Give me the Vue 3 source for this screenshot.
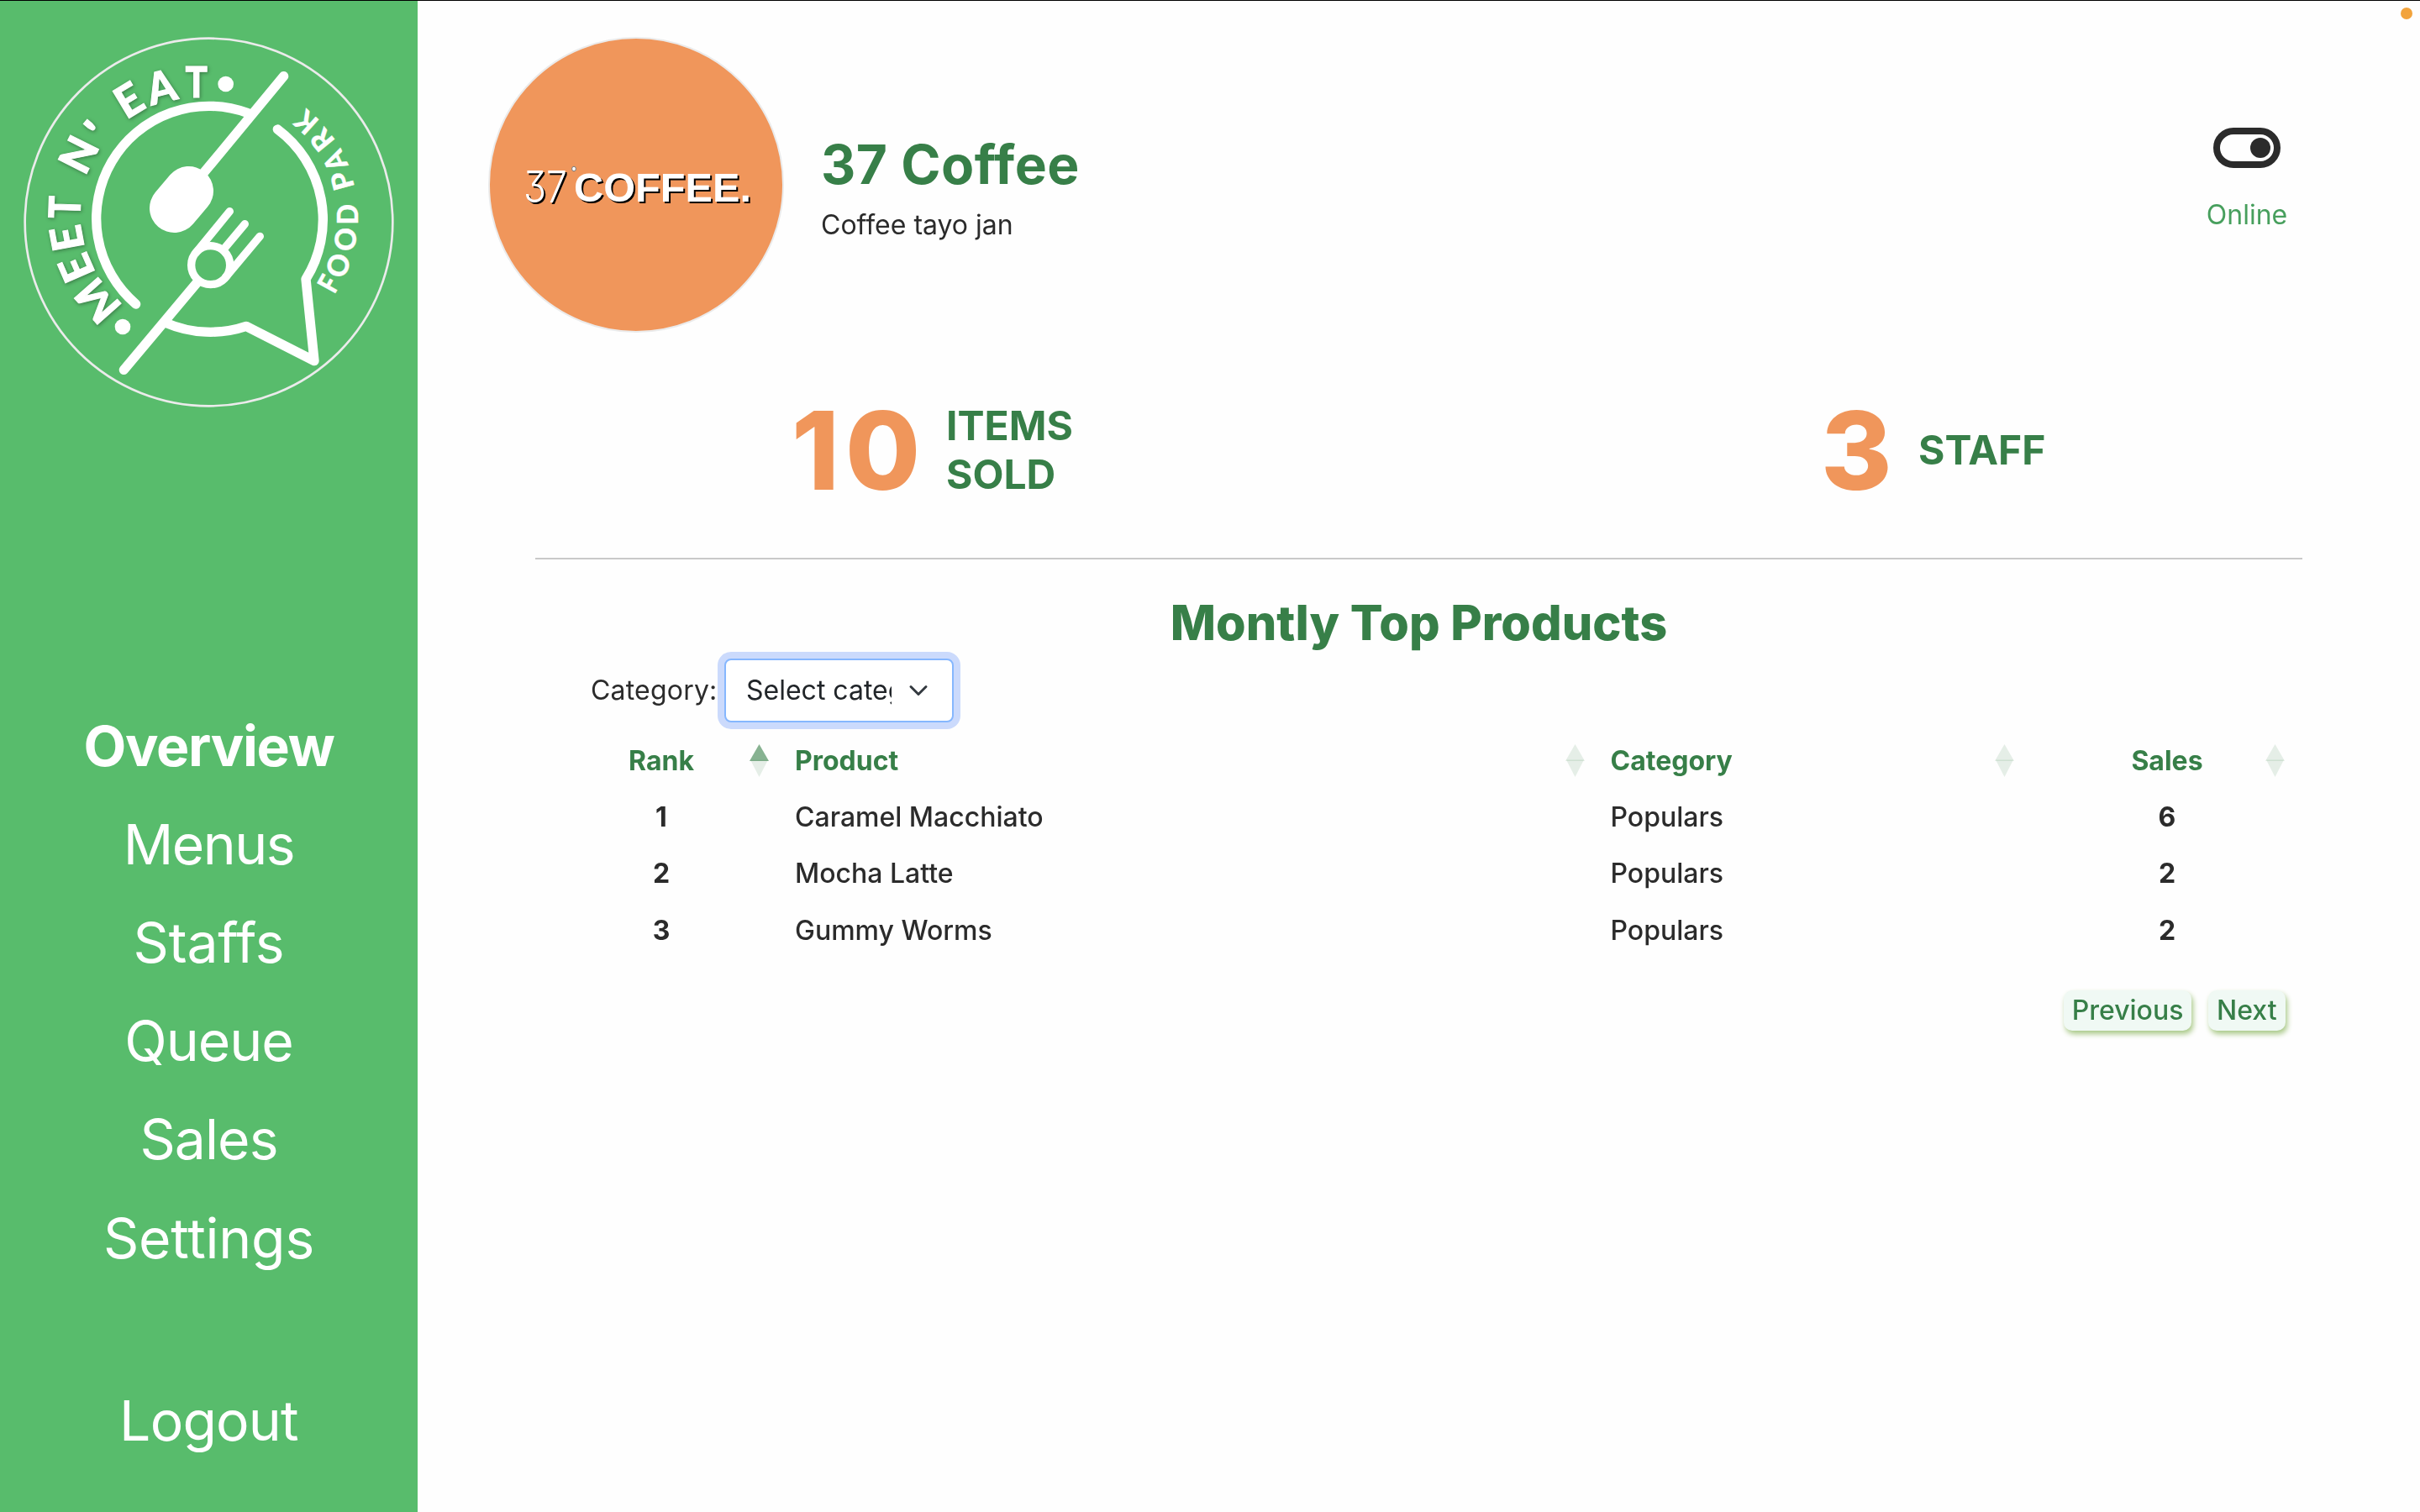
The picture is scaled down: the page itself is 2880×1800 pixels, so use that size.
<script setup>
const nav = [
  { label: 'Overview', active: true, ls: -1.3 },
  { label: 'Menus', ls: -1.5 },
  { label: 'Staffs', ls: -0.2 },
  { label: 'Queue', ls: -1 },
  { label: 'Sales', ls: -0.9 },
  { label: 'Settings', ls: -0.2 },
]

const meet = [
  { c: 'M', x: 391, y: 1038, r: -131.4 },
  { c: 'E', x: 324, y: 936, r: -113.6 },
  { c: 'E', x: 294, y: 842, r: -100.6 },
  { c: 'T', x: 287, y: 743, r: -88, s: 0.84 },
  { c: 'N', x: 331, y: 578, r: -63.4 },
  { c: "'", x: 391, y: 508, r: -50, s: 1.1 },
  { c: 'E', x: 489, y: 406, r: -31.1 },
  { c: 'A', x: 589, y: 366, r: -13.7, s: 0.94 },
  { c: 'T', x: 701, y: 350, r: 0, s: 0.84 },
]
const park = [
  { c: 'F', x: 1206, y: 1032, r: -61, s: 0.85 },
  { c: 'O', x: 1243, y: 960, r: -72 },
  { c: 'O', x: 1270, y: 860, r: -83 },
  { c: 'D', x: 1279, y: 767, r: -90, s: 0.94 },
  { c: 'P', x: 1258, y: 637, r: -105 },
  { c: 'A', x: 1230, y: 560, r: -115, s: 0.94 },
  { c: 'R', x: 1178, y: 478, r: -129.6 },
  { c: 'K', x: 1118, y: 410, r: -137.6, s: 0.94 },
]
const place = (g) => `translate(${g.x} ${g.y}) rotate(${g.r}) scale(${g.s || 1} 1)`

const columns = [
  { label: 'Rank', cls: 'rank', sorted: true },
  { label: 'Product', cls: 'product' },
  { label: 'Category', cls: 'category' },
  { label: 'Sales', cls: 'sales' },
]
const rows = [
  { rank: 1, product: 'Caramel Macchiato', category: 'Populars', sales: 6 },
  { rank: 2, product: 'Mocha Latte', category: 'Populars', sales: 2 },
  { rank: 3, product: 'Gummy Worms', category: 'Populars', sales: 2 },
]
</script>

<template>
  <div class="app">
    <aside class="sidebar">
      <svg class="logo" viewBox="84 133 1323 1323">
        <circle cx="745.5" cy="794.5" r="656.5" fill="none" stroke="#ebebeb" stroke-width="8" />
        <g fill="none" stroke="#fff" stroke-width="34" stroke-linecap="round" stroke-linejoin="round">
          <path d="M485 1087A401.5 401.5 0 0 1 885 405" />
          <path d="M991 463A401.5 401.5 0 0 1 1092 998L1122 1290L879 1166A401.5 401.5 0 0 1 592 1154" />
          <path d="M1013 273L730 615" />
          <path d="M702 1012L442 1322" />
          <path d="M622 744L674 683" stroke-width="176" />
        </g>
        <g fill="none" stroke="#fff" stroke-width="28" stroke-linecap="round">
          <circle cx="752" cy="948" r="69" />
          <path d="M820 756L699 904M874 801L803 886M928 845L805 992" />
        </g>
        <g fill="#fff">
          <circle cx="806" cy="301" r="28" />
          <circle cx="438" cy="1168" r="28" />
        </g>
        <g class="meet">
          <text v-for="(g, i) in meet" :key="i" :transform="place(g)">{{ g.c }}</text>
        </g>
        <g class="park">
          <text v-for="(g, i) in park" :key="i" :transform="place(g)">{{ g.c }}</text>
        </g>
      </svg>
      <nav class="nav">
        <a v-for="n in nav" :key="n.label" class="link" :class="{ active: n.active }" :style="{ letterSpacing: n.ls + 'px' }">{{ n.label }}</a>
        <a class="link logout">Logout</a>
      </nav>
    </aside>

    <main class="main">
      <header class="header">
        <div class="avatar">
          <svg class="brand" viewBox="0 0 280 60">
            <text class="thin" x="6" y="48" textLength="52" lengthAdjust="spacingAndGlyphs">37</text>
            <ellipse cx="66" cy="8" rx="2.4" ry="2.8" fill="#fff" stroke="#777" stroke-width="1" />
            <text class="thick" x="66" y="47" textLength="211" lengthAdjust="spacingAndGlyphs">COFFEE.</text>
          </svg>
        </div>
        <div class="identity">
          <h1 class="title">37 Coffee</h1>
          <p class="tagline">Coffee tayo jan</p>
        </div>
        <div class="status">
          <svg class="toggle" viewBox="0 0 80 48">
            <rect x="4" y="4" width="72" height="40" rx="20" fill="none" stroke="#2b2b2b" stroke-width="8" />
            <circle cx="56" cy="24" r="12" fill="#2b2b2b" />
          </svg>
          <span class="online">Online</span>
        </div>
      </header>

      <section class="stats">
        <div class="stat items">
          <span class="number">10</span>
          <span class="label">ITEMS<br />SOLD</span>
        </div>
        <div class="stat staff">
          <span class="number">3</span>
          <span class="label">STAFF</span>
        </div>
      </section>

      <h2 class="heading">Montly Top Products</h2>

      <div class="filter">
        <span class="filter-label">Category:</span>
        <div class="select">
          <span class="select-text">Select category</span>
          <svg class="chevron" viewBox="0 0 16 16">
            <path d="m2 5 6 6 6-6" fill="none" stroke="#343a40" stroke-width="2" stroke-linecap="round" stroke-linejoin="round" />
          </svg>
        </div>
      </div>

      <table class="table">
        <colgroup>
          <col v-for="c in columns" :key="c.cls" :class="'col-' + c.cls" />
        </colgroup>
        <thead>
          <tr>
            <th v-for="c in columns" :key="c.cls">
              <div class="head" :class="c.cls">
                <span class="head-label">{{ c.label }}</span>
                <svg class="sort" viewBox="0 0 23 39" fill="#377f48">
                  <path d="M11.5 0L23 20H0Z" :opacity="c.sorted ? 0.6 : 0.125" />
                  <path d="M1 18.5H22L11.5 39Z" opacity="0.125" />
                </svg>
              </div>
            </th>
          </tr>
        </thead>
        <tbody>
          <tr v-for="r in rows" :key="r.rank">
            <td class="cell-num">{{ r.rank }}</td>
            <td class="cell-text">{{ r.product }}</td>
            <td class="cell-text">{{ r.category }}</td>
            <td class="cell-num cell-sales">{{ r.sales }}</td>
          </tr>
        </tbody>
      </table>

      <div class="pager">
        <button class="page prev">Previous</button>
        <button class="page next">Next</button>
      </div>
    </main>
    <i class="indicator"></i>
  </div>
</template>

<style>
body { margin: 0; background: #fefefe; }
</style>

<style scoped>
.app {
  position: relative;
  display: flex;
  box-sizing: border-box;
  width: 2880px;
  height: 1800px;
  overflow: hidden;
  border-top: 1px solid #000;
  background: #fefefe;
  color: #2b2b2b;
  font: 400 32px/48px Inter, "Liberation Sans", sans-serif;
}
.sidebar {
  display: flex;
  flex: none;
  flex-direction: column;
  align-items: center;
  box-sizing: border-box;
  width: 497px;
  padding-top: 43px;
  background: #58bc6c;
}
.logo { display: block; flex: none; width: 441px; height: 441px; overflow: visible; }
.meet text, .park text { fill: #fff; stroke: #fff; font-family: Lato, sans-serif; font-weight: 900; text-anchor: middle; }
.meet text { font-size: 156px; stroke-width: 3; }
.meet { filter: drop-shadow(3px 4px 6px rgba(0, 0, 0, 0.35)); }
.park text { font-size: 103px; stroke-width: 1; }
.nav { display: flex; flex-direction: column; align-items: center; margin-top: 344.6px; }
.link { color: #fff; font-size: 66px; font-weight: 430; line-height: 117.2px; }
.link.active { font-weight: 660; }
.logout { margin-top: 100px; letter-spacing: -0.8px; }

.main { flex: 1; }
.header { display: flex; align-items: center; height: 352px; margin: 43px 141px 0 84px; }
.avatar {
  display: flex;
  align-items: center;
  justify-content: center;
  box-sizing: border-box;
  width: 352px;
  height: 352px;
  border: 2px solid #ebebeb;
  border-radius: 50%;
  background: #f0965b;
}
.brand { width: 280px; height: 60px; margin-top: 6px; overflow: visible; }
.brand text { fill: #fff; filter: drop-shadow(2.5px 2.5px 0 #000); }
.brand .thin { font-family: Inter, sans-serif; font-size: 52px; font-weight: 300; font-feature-settings: "cv09"; }
.brand .thick { font-family: "Liberation Sans", sans-serif; font-size: 48.6px; font-weight: 700; }
.identity { flex: 1; margin-left: 44px; padding-top: 10.6px; }
.title { margin: 0 0 9.3px; color: #377f48; font-size: 64px; font-weight: 700; line-height: 76.8px; letter-spacing: 0.5px; }
.tagline { margin: 0; }
.status { display: flex; flex-direction: column; align-items: center; gap: 32.4px; width: 130px; margin-bottom: 7.6px; }
.toggle { display: block; width: 80px; height: 48px; }
.online { color: #479f5d; }

.stats {
  display: flex;
  align-items: center;
  box-sizing: border-box;
  height: 270px;
  margin: 0 140px;
  padding: 11.6px 0 0 305px;
  border-bottom: 2px solid #c9c9c9;
}
.stat { display: flex; align-items: center; }
.items { width: 1225px; }
.number { color: #f0965b; font-size: 129px; font-weight: 800; line-height: 154px; }
.items .number { width: 184px; letter-spacing: 7px; }
.staff .number { width: 116px; }
.label { color: #377f48; font-size: 48px; font-weight: 700; line-height: 58px; }

.heading { margin: 40.5px 0 0; color: #377f48; font-size: 57.6px; font-weight: 800; line-height: 69px; text-align: center; }

.filter { display: flex; align-items: center; margin: 8.5px 0 0 206px; }
.filter-label { width: 159px; letter-spacing: 0.2px; }
.select {
  display: flex;
  align-items: center;
  justify-content: space-between;
  box-sizing: border-box;
  width: 273px;
  height: 76px;
  padding: 0 28px 0 24px;
  border: 2px solid #86b7fe;
  border-radius: 8px;
  background: #fff;
  box-shadow: 0 0 0 8px #cbdafc;
  color: #212529;
}
.select-text { width: 173px; overflow: hidden; white-space: nowrap; }
.chevron { flex: none; width: 24px; height: 24px; }

.table { width: 2097.5px; margin: 11.7px 0 0 143px; border-collapse: collapse; table-layout: fixed; }
.col-rank { width: 294px; }
.col-product { width: 970.5px; }
.col-category { width: 511px; }
.col-sales { width: 322px; }
.table th, .table td { height: 67.4px; padding: 0; }
.head { display: flex; align-items: center; color: #377f48; font-weight: 700; text-align: left; }
.head-label { flex: 1; padding-top: 2px; }
.rank, .sales { text-align: center; }
.rank { padding-left: 42px; }
.sales { padding-left: 47px; }
.product, .category { padding-left: 12px; }
.sort { display: block; flex: none; width: 23px; height: 39px; margin-right: 19px; }
.table .cell-text { padding-left: 12px; font-weight: 500; }
.cell-num { font-weight: 700; text-align: center; }
.table .cell-sales { padding-left: 5px; }

.pager { display: flex; justify-content: flex-end; gap: 19.6px; margin: 38px 160px 0 0; }
.page {
  height: 47.6px;
  padding: 1px 0 0;
  border: 0;
  border-radius: 10px;
  background: #f0f9f4;
  box-shadow: 2px 4px 6px #a8c886;
  color: #377f48;
  font: 500 32px/46.6px Inter, "Liberation Sans", sans-serif;
}
.prev { width: 152px; }
.next { width: 92.4px; }

.indicator { position: absolute; top: 8px; right: 9px; width: 14px; height: 14px; border-radius: 50%; background: #f2a33c; }
</style>
